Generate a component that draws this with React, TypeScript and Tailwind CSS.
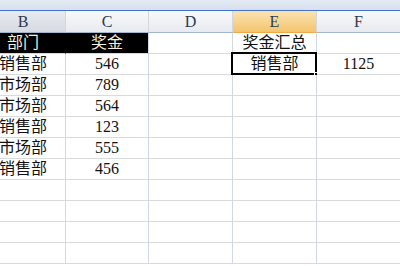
const COLS = ["B", "C", "D", "E", "F"];
const WIDTHS = ["w-[85px]", "w-[83px]", "w-[84px]", "w-[84px]", "w-[84px]"];

const serif = "font-['Liberation_Serif','Noto_Sans_CJK_SC',serif]";

const rows: string[][] = [
  ["部门", "奖金", "", "奖金汇总", ""],
  ["销售部", "546", "", "销售部", "1125"],
  ["市场部", "789", "", "", ""],
  ["市场部", "564", "", "", ""],
  ["销售部", "123", "", "", ""],
  ["市场部", "555", "", "", ""],
  ["销售部", "456", "", "", ""],
  ["", "", "", "", ""],
  ["", "", "", "", ""],
  ["", "", "", "", ""],
  ["", "", "", "", ""],
];

function HeaderCell({ col, i }: { col: string; i: number }) {
  const tone =
    col === "E"
      ? "bg-gradient-to-b from-[#fae3b1] to-[#f3c46c] border-b-[#f0a848]"
      : col === "B"
        ? "bg-gradient-to-b from-[#e8ebef] to-[#d6dae1] border-b-[#9eb6ce]"
        : "bg-gradient-to-b from-[#f8f9fb] to-[#e7eaef] border-b-[#9eb6ce]";
  return (
    <div
      className={`${WIDTHS[i]} h-[22px] shrink-0 flex items-center justify-center border-r border-r-[#d2d6dd] border-b text-[16px] text-[#2a3a52] ${tone}`}
    >
      {col}
    </div>
  );
}

function Cell({ r, c, value }: { r: number; c: number; value: string }) {
  const black = r === 0 && c < 2;
  const selected = r === 1 && c === 3;
  return (
    <div
      className={`${WIDTHS[c]} relative h-[21px] shrink-0 flex items-center justify-center border-b border-r text-[16px] leading-none ${
        black
          ? "bg-black text-[#f4f0dc] border-b-[#d4d7dc] " + (c === 0 ? "border-r-black" : "border-r-[#d0d7e5]")
          : "bg-white text-[#111] border-b-[#d8dadd] border-r-[#d0d7e5]"
      }`}
    >
      <span className="pb-[1px]">{value}</span>
      {selected && (
        <>
          <div className="absolute -left-[2px] -top-[2px] h-[23px] w-[86px] border-2 border-black" />
          <div className="absolute -bottom-[3px] -right-[3px] h-[5px] w-[5px] bg-black border border-white" />
        </>
      )}
    </div>
  );
}

export default function App() {
  return (
    <div className={`w-[400px] h-[266px] overflow-hidden bg-white ${serif}`}>
      <div className="h-[10px] bg-gradient-to-b from-[#e4ebf4] to-[#d6e0ec]" />
      <div className="h-[1px] bg-[#4473c9]" />
      <div className="ml-[-19px] flex">
        {COLS.map((col, i) => (
          <HeaderCell key={col} col={col} i={i} />
        ))}
      </div>
      {rows.map((row, r) => (
        <div key={r} className="ml-[-19px] flex">
          {row.map((v, c) => (
            <Cell key={c} r={r} c={c} value={v} />
          ))}
        </div>
      ))}
    </div>
  );
}
